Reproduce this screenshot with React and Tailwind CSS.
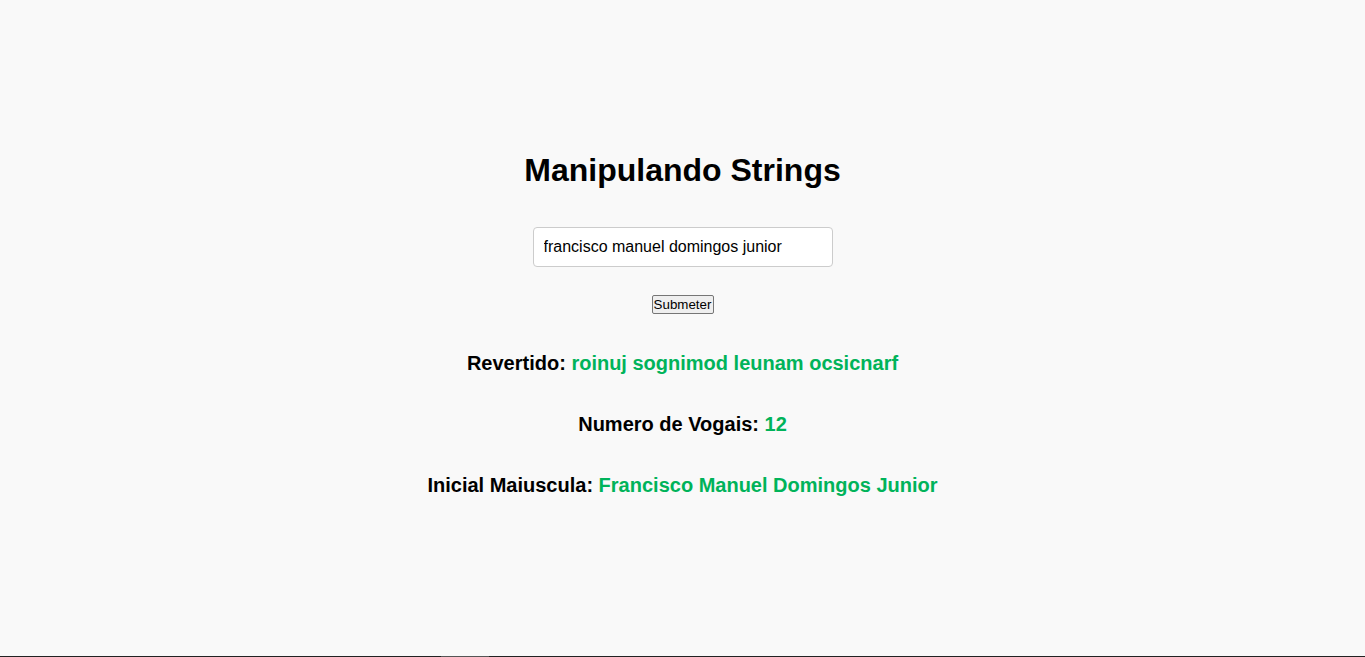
export default function App() {
  return (
    <div className="min-h-screen h-[657px] bg-[#f9f9f9] flex flex-col font-['Liberation_Sans',Arial,sans-serif] text-black">
      <div className="flex-1 flex flex-col items-center pt-[152px]">
        <h1 className="text-[32px] leading-[37px] font-bold">Manipulando Strings</h1>
        <input
          type="text"
          defaultValue="francisco manuel domingos junior"
          className="mt-[38px] w-[300px] h-[40px] px-[10px] bg-white border border-[#cccccc] rounded-[4px] text-[16px] text-black outline-none"
        />
        <button className="mt-[28px] h-[19px] w-[62px] bg-[#efefef] border border-[#767676] rounded-[2px] text-[13.33px] leading-[15px] text-black">
          Submeter
        </button>
        <p className="mt-[38px] text-[20px] leading-[23px] font-bold">
          Revertido: <span className="text-[#00b35a]">roinuj sognimod leunam ocsicnarf</span>
        </p>
        <p className="mt-[38px] text-[20px] leading-[23px] font-bold">
          Numero de Vogais: <span className="text-[#00b35a]">12</span>
        </p>
        <p className="mt-[38px] text-[20px] leading-[23px] font-bold">
          Inicial Maiuscula: <span className="text-[#00b35a]">Francisco Manuel Domingos Junior</span>
        </p>
      </div>
      <div className="h-[1px] bg-[#222222] flex">
        <div className="ml-[441px] w-[48px] bg-[#555555]" />
      </div>
    </div>
  );
}
